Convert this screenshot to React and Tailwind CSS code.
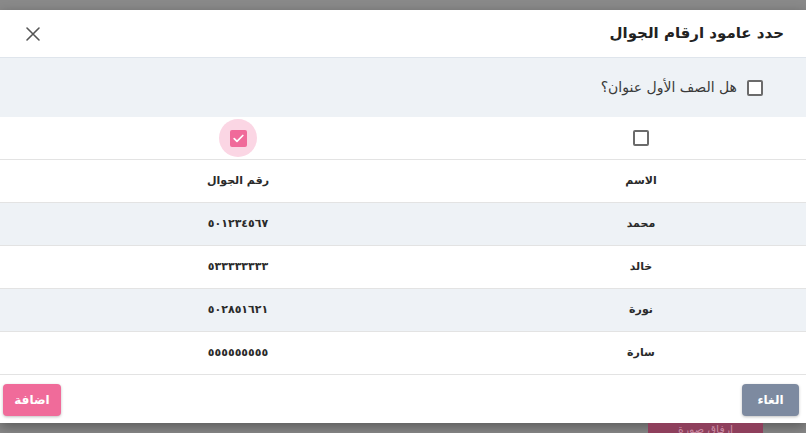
import React from "react";

const rows = [
  { name: "محمد", phone: "٥٠١٢٣٤٥٦٧", alt: true },
  { name: "خالد", phone: "٥٣٣٣٣٣٣٣٣", alt: false },
  { name: "نورة", phone: "٥٠٢٨٥١٦٢١", alt: true },
  { name: "سارة", phone: "٥٥٥٥٥٥٥٥٥", alt: false },
];

function Box() {
  return <span className="block w-[16px] h-[16px] border-2 border-[#6b6b6b] rounded-[2px] bg-white" />;
}

const cell = "h-[43px] flex items-center justify-center border-b border-[#e3e3e3] text-[11px] font-bold text-[#2a2a2a]";

export default function App() {
  return (
    <div
      dir="rtl"
      className="w-[806px] h-[433px] overflow-hidden bg-[#8a8a8a] flex flex-col"
      style={{ fontFamily: '"DejaVu Sans", "Noto Sans", sans-serif' }}
    >
      <div className="h-[10px]" />
      <div className="bg-white w-[806px] h-[413px] flex flex-col shadow-[0_4px_12px_rgba(0,0,0,0.35)]">
        {/* header */}
        <div className="h-[48px] shrink-0 flex items-center justify-between pr-[22px] pl-[24px] border-b border-[#dfe5ec]">
          <div className="text-[15px] font-bold text-[#222]">حدد عامود ارقام الجوال</div>
          <svg width="18" height="18" viewBox="0 0 18 18" className="text-[#555]">
            <path d="M3 3L15 15M15 3L3 15" stroke="currentColor" strokeWidth="1.6" strokeLinecap="round" />
          </svg>
        </div>
        {/* first row title option */}
        <div className="h-[59px] shrink-0 bg-[#eef2f6] flex items-center pr-[43px] gap-[10px]">
          <Box />
          <span className="text-[14px] text-[#3a3a3a]">هل الصف الأول عنوان؟</span>
        </div>
        {/* table */}
        <div className="grid grid-cols-[330px_476px] shrink-0">
          <div className="h-[43px] flex items-center justify-center border-b border-[#e3e3e3]">
            <Box />
          </div>
          <div className="h-[43px] flex items-center justify-center border-b border-[#e3e3e3]">
            <span className="w-[38px] h-[38px] rounded-full bg-[#fbd6e4] flex items-center justify-center">
              <span className="w-[17px] h-[17px] rounded-[2px] bg-[#f06a9a] flex items-center justify-center">
                <svg width="11" height="9" viewBox="0 0 11 9">
                  <path d="M1.2 4.6L4 7.3L9.8 1.5" stroke="white" strokeWidth="1.7" fill="none" strokeLinecap="round" strokeLinejoin="round" />
                </svg>
              </span>
            </span>
          </div>
          <div className={cell}>الاسم</div>
          <div className={cell}>رقم الجوال</div>
          {rows.map((r, i) => (
            <React.Fragment key={i}>
              <div className={`${cell} ${r.alt ? "bg-[#eef2f6]" : "bg-white"}`}>{r.name}</div>
              <div className={`${cell} ${r.alt ? "bg-[#eef2f6]" : "bg-white"}`}>{r.phone}</div>
            </React.Fragment>
          ))}
        </div>
        {/* footer */}
        <div className="flex-1 flex items-center justify-between pr-[7px] pl-[3px] pt-[2px]">
          <button className="w-[57px] h-[32px] rounded-[4px] bg-[#7d8aa0] text-white text-[12px] font-bold shadow-[0_1px_3px_rgba(0,0,0,0.25)]">الغاء</button>
          <button className="w-[58px] h-[32px] rounded-[4px] bg-[#f06b9a] text-white text-[12px] font-bold shadow-[0_1px_3px_rgba(0,0,0,0.25)]">اضافة</button>
        </div>
      </div>
      <div className="flex-1 flex pr-[43px]">
        <div className="w-[115px] h-[10px] bg-[#8e3f5c] flex items-start justify-center text-[11px] text-[#c98aa2] leading-[12px] pt-[1px]">
          <span>ارفاق صورة</span>
        </div>
      </div>
    </div>
  );
}
